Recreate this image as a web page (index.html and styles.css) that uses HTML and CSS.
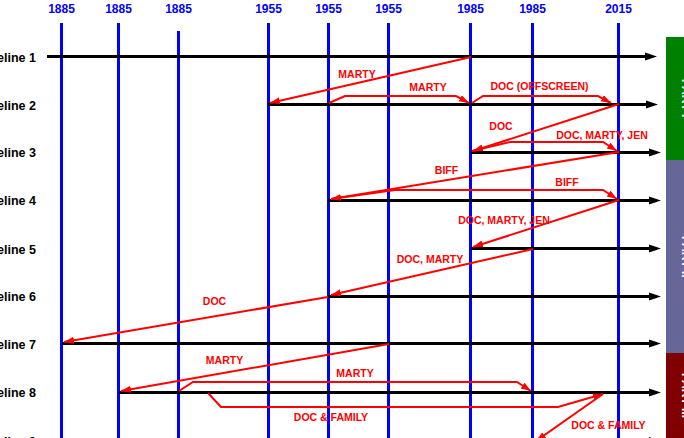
FILE: index.html
```html
<!DOCTYPE html>
<html lang="en">
<head>
<meta charset="utf-8">
<title>Timelines</title>
<link rel="stylesheet" href="styles.css">
</head>
<body>
<div class="page">
  <svg class="chart" width="666" height="438" viewBox="0 0 666 438" xmlns="http://www.w3.org/2000/svg">
    <defs>
      <marker id="ah" markerUnits="userSpaceOnUse" markerWidth="11" markerHeight="8" refX="10" refY="3.5" orient="auto">
        <path class="ahead" d="M0,0 L10,3.5 L0,7 z"/>
      </marker>
    </defs>

    <!-- year guides -->
    <g class="guides">
      <line x1="61.5" y1="23" x2="61.5" y2="438"/>
      <line x1="118.5" y1="23" x2="118.5" y2="438"/>
      <line x1="178.5" y1="31" x2="178.5" y2="438"/>
      <line x1="268.5" y1="23" x2="268.5" y2="438"/>
      <line x1="328.5" y1="23" x2="328.5" y2="438"/>
      <line x1="388.5" y1="23" x2="388.5" y2="438"/>
      <line x1="470.5" y1="23" x2="470.5" y2="438"/>
      <line x1="532.5" y1="23" x2="532.5" y2="438"/>
      <line x1="618.5" y1="23" x2="618.5" y2="438"/>
    </g>
    <g class="years">
      <text x="61.5" y="13">1885</text>
      <text x="118.5" y="13">1885</text>
      <text x="178.5" y="13">1885</text>
      <text x="268.5" y="13">1955</text>
      <text x="328.5" y="13">1955</text>
      <text x="388.5" y="13">1955</text>
      <text x="470.5" y="13">1985</text>
      <text x="532.5" y="13">1985</text>
      <text x="618.5" y="13">2015</text>
    </g>

    <!-- timelines -->
    <g class="tlines">
      <line x1="47" y1="56.5" x2="647" y2="56.5"/>
      <line x1="268" y1="104.5" x2="647" y2="104.5"/>
      <line x1="471" y1="152.5" x2="650" y2="152.5"/>
      <line x1="328" y1="200.5" x2="650" y2="200.5"/>
      <line x1="471" y1="248.5" x2="650" y2="248.5"/>
      <line x1="328" y1="296.5" x2="650" y2="296.5"/>
      <line x1="62" y1="343.5" x2="650" y2="343.5"/>
      <line x1="119" y1="392.5" x2="650" y2="392.5"/>
      <line x1="30" y1="441.5" x2="650" y2="441.5"/>
    </g>
    <g class="theads">
      <polygon points="657,56.5 645,52.5 645,60.5"/>
      <polygon points="658,104.5 646,100.5 646,108.5"/>
      <polygon points="661,152.5 649,148.5 649,156.5"/>
      <polygon points="661,200.5 649,196.5 649,204.5"/>
      <polygon points="661,248.5 649,244.5 649,252.5"/>
      <polygon points="661,296.5 649,292.5 649,300.5"/>
      <polygon points="661,343.5 649,339.5 649,347.5"/>
      <polygon points="661,392.5 649,388.5 649,396.5"/>
      <polygon points="661,441.5 649,437 649,446"/>
    </g>
    <g class="tlabels">
      <text x="36" y="61.5">Timeline 1</text>
      <text x="36" y="109.5">Timeline 2</text>
      <text x="36" y="157">Timeline 3</text>
      <text x="36" y="205">Timeline 4</text>
      <text x="36" y="253.5">Timeline 5</text>
      <text x="36" y="301">Timeline 6</text>
      <text x="36" y="349">Timeline 7</text>
      <text x="36" y="397">Timeline 8</text>
      <text x="36" y="446">Timeline 9</text>
    </g>

    <!-- trips -->
    <g class="trips">
      <line x1="471" y1="57" x2="270" y2="103" marker-end="url(#ah)"/>
      <polyline points="329,103 345,96 456,96 469,103" marker-end="url(#ah)"/>
      <polyline points="472,103 483,96 598,96 611,103" marker-end="url(#ah)"/>
      <line x1="619" y1="104" x2="473" y2="151" marker-end="url(#ah)"/>
      <polyline points="472,151 510,142 603,142 617,151" marker-end="url(#ah)"/>
      <line x1="619" y1="152" x2="331" y2="199" marker-end="url(#ah)"/>
      <polyline points="331,199 395,190 603,190 617,199" marker-end="url(#ah)"/>
      <line x1="619" y1="200" x2="473" y2="247" marker-end="url(#ah)"/>
      <line x1="533" y1="249" x2="331" y2="295" marker-end="url(#ah)"/>
      <line x1="328" y1="297" x2="64" y2="342" marker-end="url(#ah)"/>
      <line x1="389" y1="344" x2="121" y2="391" marker-end="url(#ah)"/>
      <polyline points="179,391 193,382 517,382 531,391" marker-end="url(#ah)"/>
      <polyline points="208,393 221,407 558,407 603,394" marker-end="url(#ah)"/>
      <line x1="603" y1="394" x2="536" y2="441" marker-end="url(#ah)"/>
    </g>
    <g class="trip-labels">
      <text x="357" y="77.5">MARTY</text>
      <text x="428" y="91">MARTY</text>
      <text x="539.5" y="90">DOC (OFFSCREEN)</text>
      <text x="501" y="130">DOC</text>
      <text x="602" y="138.5">DOC, MARTY, JEN</text>
      <text x="446.5" y="174">BIFF</text>
      <text x="567" y="186">BIFF</text>
      <text x="504" y="223.5">DOC, MARTY, JEN</text>
      <text x="430" y="263">DOC, MARTY</text>
      <text x="214.5" y="305">DOC</text>
      <text x="224.5" y="364">MARTY</text>
      <text x="355" y="377">MARTY</text>
      <text x="331" y="421">DOC &amp; FAMILY</text>
      <text x="608.5" y="428.5">DOC &amp; FAMILY</text>
    </g>
  </svg>

  <div class="side">
    <div class="part part-1"><span>PART I</span></div>
    <div class="part part-2"><span>PART II</span></div>
    <div class="part part-3"><span>PART III</span></div>
  </div>
</div>
</body>
</html>
```

FILE: styles.css
```css
html, body {
  margin: 0;
  padding: 0;
  background: #ffffff;
  overflow: hidden;
}

.page {
  display: flex;
  width: 706px;
  height: 438px;
  overflow: hidden;
  font-family: "Liberation Sans", Arial, sans-serif;
}

.chart {
  flex: none;
  display: block;
}

.guides line {
  stroke: #0000ff;
  stroke-width: 3;
}

.years text {
  font: bold 12px "Liberation Sans", Arial, sans-serif;
  fill: #0000ff;
  text-anchor: middle;
}

.tlines line {
  stroke: #000000;
  stroke-width: 3;
}

.theads polygon {
  fill: #000000;
}

.tlabels text {
  font: bold 12.5px "Liberation Sans", Arial, sans-serif;
  fill: #000000;
  text-anchor: end;
}

.trips line,
.trips polyline {
  stroke: #ff0000;
  stroke-width: 2;
  fill: none;
}

.ahead {
  fill: #ff0000;
}

.trip-labels text {
  font: bold 10.5px "Liberation Sans", Arial, sans-serif;
  fill: #ff0000;
  text-anchor: middle;
}

.side {
  flex: none;
  width: 40px;
  display: flex;
  flex-direction: column;
  padding-top: 37px;
  box-sizing: border-box;
  height: 438px;
}

.part {
  display: flex;
  align-items: center;
  justify-content: center;
  color: #ffffff;
  font: bold 12px "Liberation Sans", Arial, sans-serif;
  overflow: hidden;
}

.part span {
  writing-mode: vertical-rl;
}

.part-1 {
  height: 123px;
  background: #008000;
}

.part-2 {
  height: 193px;
  background: #666699;
}

.part-3 {
  flex: 1;
  background: #800000;
}
```
